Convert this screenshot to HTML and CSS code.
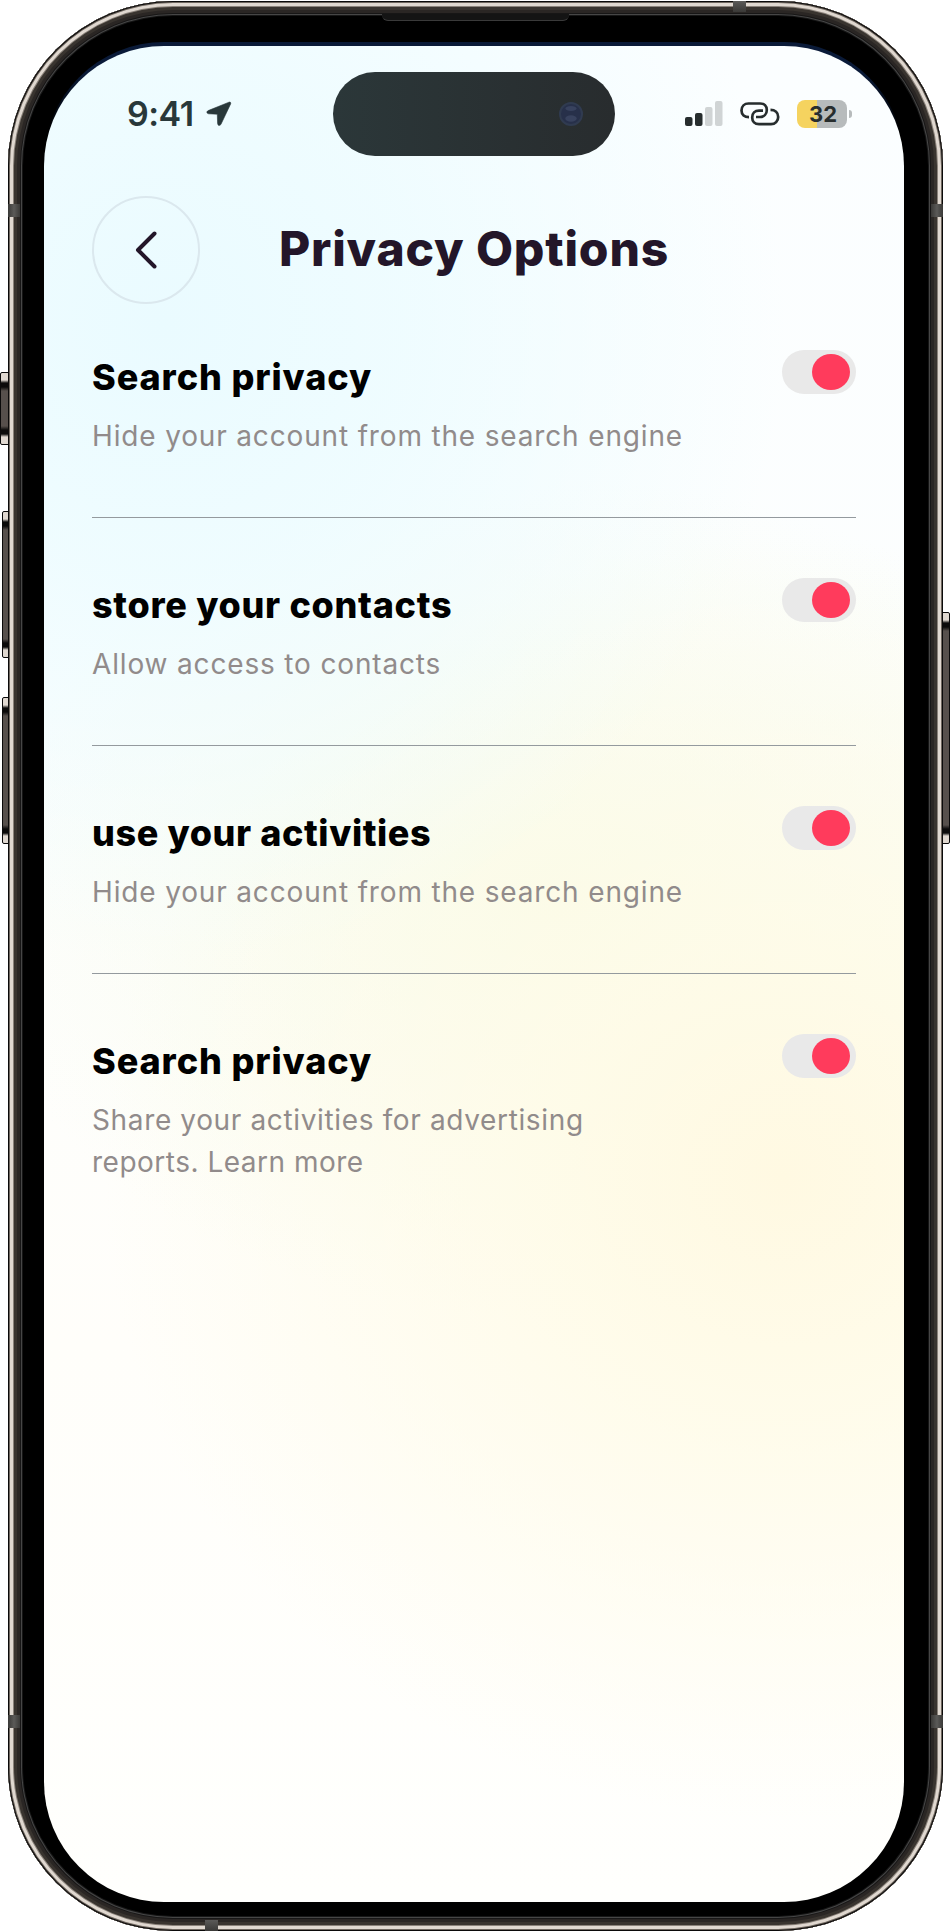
FILE: index.html
```html
<!DOCTYPE html>
<html lang="en">
<head>
<meta charset="utf-8">
<title>Privacy Options</title>
<link rel="stylesheet" href="styles.css">
</head>
<body>
<div class="phone">
  <span class="key key-action"></span>
  <span class="key key-up"></span>
  <span class="key key-down"></span>
  <span class="key key-power"></span>
  <span class="band band-left-top"></span>
  <span class="band band-right-top"></span>
  <span class="band band-left-bottom"></span>
  <span class="band band-right-bottom"></span>
  <span class="band band-top"></span>
  <span class="band band-bottom"></span>
  <span class="speaker"></span>
  <div class="glass">
    <main class="screen">
      <div class="status">
        <div class="status-left">
          <span class="time">9:41</span>
          <svg class="location" width="26" height="26" viewBox="0 0 26 26"><path d="M23 1.200 2.200 9.600c-2 .9-1.500 3.100.5 3.200l8.600.4.300 9.200c.1 2.400 2.600 2.700 3.500.6L24.600 3c.6-1.400-.300-2.300-1.600-1.800z" fill="#29383a" stroke="#29383a" stroke-width=".6"/></svg>
        </div>
        <div class="island"><svg class="camera" width="24" height="24" viewBox="0 0 24 24"><circle cx="12" cy="12" r="11" fill="#27304a" stroke="#303b50" stroke-width="2"/><ellipse cx="12" cy="6.500" rx="5.500" ry="2.500" fill="#38425e"/><ellipse cx="12" cy="16.500" rx="5.700" ry="3.200" fill="#38425e"/></svg></div>
        <div class="status-right">
          <svg class="signal" width="38" height="26" viewBox="0 0 38 26"><rect x="0" y="16" width="7.500" height="9" rx="2" fill="#272d2e"/><rect x="10" y="12" width="7.500" height="13" rx="2" fill="#272d2e"/><rect x="20" y="6" width="7.500" height="19" rx="2" fill="#d0d4d5"/><rect x="30" y="0" width="7.500" height="25" rx="2" fill="#d0d4d5"/></svg>
          <svg class="link" width="40" height="24" viewBox="0 0 40 24" fill="none" stroke="#272d2e" stroke-width="2.700" stroke-linecap="butt"><path d="M9 15.200C4.500 15.200 1.500 12.600 1.500 8.500S4.500 1.500 8.500 1.500H20c4.300 0 6.800 2.700 6.800 6.500s-2.600 7-6.800 7h-4"/><path d="M30.500 7.900c4.500 0 7.700 2.900 7.700 7s-3 7.300-7.200 7.300H19c-4.300 0-6.800-2.800-6.800-6.800S14.800 8.600 19 8.600h4"/></svg>
          <div class="battery"><span class="level">32</span><i class="nub"></i></div>
        </div>
      </div>
      <header class="header">
        <button class="back" aria-label="Back"><svg width="24" height="40" viewBox="0 0 24 40"><path d="M20.500 3.500 4 20l16.500 16.500" fill="none" stroke="#231629" stroke-width="4" stroke-linecap="round" stroke-linejoin="round"/></svg></button>
        <h1 class="title">Privacy Options</h1>
      </header>
      <section class="options">
        <div class="option">
          <div><h2 class="name search">Search privacy</h2><p class="desc">Hide your account from the search engine</p></div>
          <span class="toggle"></span>
        </div>
        <div class="option">
          <div><h2 class="name contacts">store your contacts</h2><p class="desc">Allow access to contacts</p></div>
          <span class="toggle"></span>
        </div>
        <div class="option">
          <div><h2 class="name activities">use your activities</h2><p class="desc">Hide your account from the search engine</p></div>
          <span class="toggle"></span>
        </div>
        <div class="option">
          <div><h2 class="name search">Search privacy</h2><p class="desc reports">Share your activities for advertising<br><span class="more">reports. Learn more</span></p></div>
          <span class="toggle"></span>
        </div>
      </section>
    </main>
  </div>
</div>
</body>
</html>
```
FILE: styles.css
```css
* { box-sizing: border-box; }
body { margin: 0; background: #fff; font-family: Inter, "Liberation Sans", sans-serif; }
h1, h2, p { margin: 0; white-space: nowrap; }
.phone {
  position: relative;
  width: 935px;
  height: 1930px;
  margin: 1px 0 0 8px;
  padding: 41px 39px 29px 36px;
  border-radius: 165px;
  background: #000;
  box-shadow: inset 0 0 0 1px #0b0a0a, inset 0 0 0 2px #6f675f, inset 0 0 0 5px #e0d8d0,
    inset 0 0 0 6px #8a827a, inset 0 0 0 9px #39342f, inset 0 0 0 12px #2a2624,
    inset 0 0 0 13px #171616, inset 0 0 0 14px #464646, inset 0 0 0 15px #161616;
}
.key {
  position: absolute;
  border: 1px solid #0b0a0a;
  border-radius: 2px 0 0 2px;
  background: linear-gradient(#e0d8d0 0 7px, #0b0a0a 10px 14px, #57504c 18px calc(100% - 18px), #0b0a0a calc(100% - 14px) calc(100% - 10px), #e0d8d0 calc(100% - 7px));
}
.key-action { left: -8px; top: 371px; width: 9px; height: 73px; }
.key-up { left: -6px; top: 510px; width: 7px; height: 147px; }
.key-down { left: -6px; top: 696px; width: 7px; height: 147px; }
.key-power { right: -7px; top: 611px; width: 8px; height: 232px; border-radius: 0 2px 2px 0; }
.band { position: absolute; background: linear-gradient(90deg, #3a3937, #5b5a58, #3a3937); width: 12px; height: 13px; }
.band-left-top { left: 0; top: 203px; }
.band-right-top { right: 0; top: 203px; }
.band-left-bottom { left: 0; top: 1714px; }
.band-right-bottom { right: 0; top: 1714px; }
.band-top, .band-bottom { width: 13px; height: 11px; background: linear-gradient(#5b5a58, #3a3937); }
.band-top { left: 725px; top: 0; }
.band-bottom { left: 197px; bottom: 0; }
.speaker { position: absolute; left: 374px; top: 13px; width: 187px; height: 7px; background: #141414; border-bottom: 1px solid #3a3a3a; border-radius: 0 0 6px 6px; }
.glass { height: 100%; padding-top: 4px; border-radius: 120px; background: linear-gradient(#0a1a38 30px, #000 90px); }
.screen {
  height: 100%;
  padding: 26px 48px 0;
  border-radius: 120px;
  background:
    radial-gradient(ellipse 620px 640px at 14% 15%, rgba(234,251,255,1), rgba(237,252,255,.85) 40%, rgba(245,254,255,0)),
    radial-gradient(ellipse 680px 640px at 86% 61%, #fff9e2, rgba(255,251,230,.8) 35%, rgba(255,254,247,0)),
    radial-gradient(ellipse 600px 420px at 60% 46%, #f8fbea, rgba(250,252,240,0)),
    linear-gradient(#fbfeff, #fcfefe 35%, #fffefa 70%, #fffffd);
}
.status { display: grid; grid-template-columns: 241px 282px 238px; height: 84px; align-items: center; }
.status-left { display: flex; align-items: center; gap: 12px; padding-left: 35px; }
.time { font-size: 34px; font-weight: 600; line-height: 40px; color: #29383a; letter-spacing: -.5px; }
.island { display: flex; align-items: center; justify-content: flex-end; height: 84px; padding-right: 32px; border-radius: 42px; background: linear-gradient(90deg, #2b3739, #282c2e); }
.status-right { display: flex; align-items: center; padding-left: 70px; }
.link { margin-left: 17px; }
.battery { position: relative; display: flex; margin-left: 17px; width: 50px; height: 28px; border-radius: 8px; background: linear-gradient(90deg, #f5d35f 20px, #b7bbbc 20px); }
.level { width: 100%; padding-left: 2px; text-align: center; font-size: 22px; font-weight: 700; line-height: 28px; color: #272d2e; }
.nub { position: absolute; right: -5px; top: 10px; width: 3px; height: 8px; border-radius: 0 4px 4px 0; background: #b7bbbc; }
.header { display: grid; grid-template-columns: 108px 1fr 108px; align-items: center; margin-top: 40px; }
.back { display: flex; align-items: center; justify-content: center; width: 108px; height: 108px; padding: 0; border: 2px solid #dbe8ee; border-radius: 50%; background: none; }
.title { justify-self: center; padding-bottom: 2px; font-size: 48px; font-weight: 800; line-height: 72px; letter-spacing: .83px; color: #231629; }
.options { padding-top: 46px; }
.option { display: flex; justify-content: space-between; height: 168px; margin-bottom: 60px; border-bottom: 1px solid #949a9e; }
.option:last-child { border-bottom: 0; }
.name { font-size: 36px; font-weight: 800; line-height: 54px; color: #000; }
.search { letter-spacing: .9px; }
.contacts { letter-spacing: .7px; }
.activities { letter-spacing: .6px; }
.desc { margin-top: 11px; font-size: 28px; line-height: 42px; letter-spacing: .84px; color: #918b8b; }
.reports { letter-spacing: .64px; }
.more { letter-spacing: .5px; }
.toggle { display: flex; justify-content: flex-end; width: 74px; height: 44px; padding: 4px 6px; border-radius: 22px; background: #e9e9e9; }
.toggle::before { content: ""; width: 38px; height: 36px; border-radius: 50%; background: #ff3b5c; }
```
